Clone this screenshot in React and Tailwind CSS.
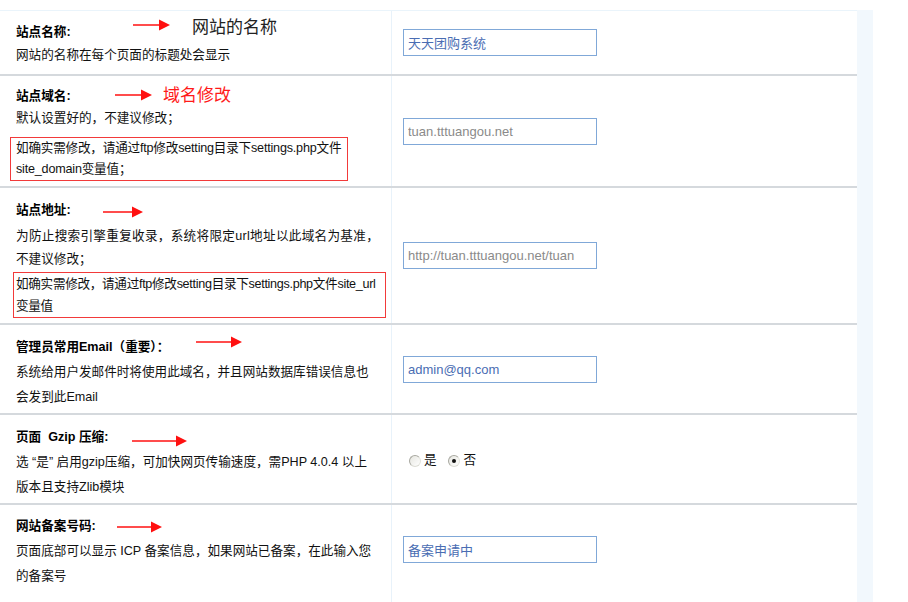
import React from "react";

// Red pointer used next to section titles
function Arrow({ w, className }) {
  return (
    <svg
      width={w}
      height="12"
      viewBox={`0 0 ${w} 12`}
      className={"pointer-events-none absolute " + className}
    >
      <line x1="0" y1="6" x2={w - 9} y2="6" stroke="#ff1010" strokeWidth="1.5" />
      <polygon points={`${w - 11},0.5 ${w},6 ${w - 11},11.5`} fill="#ff1010" />
    </svg>
  );
}

function Field({ value, muted }) {
  return (
    <input
      readOnly
      defaultValue={value}
      className={
        "h-[27px] w-[194px] border border-[#80a8d8] bg-white px-[4px] text-[13px] outline-none font-['Liberation_Sans','Noto_Sans_CJK_SC',sans-serif] " +
        (muted ? "text-[#8a8a8a]" : "text-[#4a6db3]")
      }
    />
  );
}

function Radio({ checked }) {
  return (
    <span className="relative inline-flex h-[12px] w-[12px] items-center justify-center rounded-full border border-[#a8a8a0] border-r-[#e4e4dc] border-b-[#dcdcd4] bg-linear-to-br from-[#e6e6e0] to-white">
      {checked && <span className="h-[4px] w-[4px] rounded-full bg-[#111]" />}
    </span>
  );
}

function Left({ children, className }) {
  return (
    <div
      className={
        "w-[392px] shrink-0 border-r border-[#e8f2fa] pl-4 text-[12.6px] text-[#111] " +
        (className || "")
      }
    >
      {children}
    </div>
  );
}

export default function App() {
  return (
    <div className="h-[602px] w-[908px] overflow-hidden bg-white font-['Liberation_Sans','Noto_Sans_CJK_SC',sans-serif]">
      <div className="mt-[10px] flex">
        <div className="w-[857px] shrink-0 border-t border-[#eaf4fb]">
          {/* 站点名称 */}
          <div className="relative flex h-[65px] border-b-2 border-[#d5d9dd]">
            <Left className="pt-[10px] leading-[23px]">
              <div className="font-bold text-black">站点名称:</div>
              <div className="whitespace-nowrap">网站的名称在每个页面的标题处会显示</div>
            </Left>
            <div className="flex flex-1 items-center pl-[11px]">
              <Field value="天天团购系统" />
            </div>
            <Arrow w={37} className="left-[133px] top-[8px]" />
            <span className="absolute left-[192px] top-[5px] text-[17px] leading-[24px] text-[#222]">
              网站的名称
            </span>
          </div>

          {/* 站点域名 */}
          <div className="relative flex h-[112px] border-b-2 border-[#d5d9dd]">
            <Left className="pt-[10px] leading-[21px]">
              <div className="font-bold text-black">站点域名:</div>
              <div className="mt-[1px] whitespace-nowrap">默认设置好的，不建议修改；</div>
              <div className="ml-[-6px] mt-[8px] w-[338px] whitespace-nowrap border border-[#f23a3a] pl-[5px] tracking-[-0.2px]">
                <div>如确实需修改，请通过ftp修改setting目录下settings.php文件</div>
                <div>site_domain变量值；</div>
              </div>
            </Left>
            <div className="flex flex-1 items-center pl-[11px]">
              <Field value="tuan.tttuangou.net" muted />
            </div>
            <Arrow w={37} className="left-[115px] top-[13px]" />
            <span className="absolute left-[163px] top-[8px] text-[17px] leading-[24px] text-[#ff1a1a]">
              域名修改
            </span>
          </div>

          {/* 站点地址 */}
          <div className="relative flex h-[137px] border-b-2 border-[#d5d9dd]">
            <Left className="pt-[11px]">
              <div className="font-bold leading-[22px] text-black">站点地址:</div>
              <div className="mt-[4px] whitespace-nowrap leading-[23px]">
                <div className="tracking-[0.3px]">为防止搜索引擎重复收录，系统将限定url地址以此域名为基准，</div>
                <div>不建议修改；</div>
              </div>
              <div className="ml-[-3px] mt-[1px] w-[373px] whitespace-nowrap border border-[#f23a3a] pl-[2px] leading-[22px] tracking-[-0.3px]">
                <div>如确实需修改，请通过ftp修改setting目录下settings.php文件site_url</div>
                <div>变量值</div>
              </div>
            </Left>
            <div className="flex flex-1 items-center pl-[11px]">
              <Field value="http://tuan.tttuangou.net/tuan" muted />
            </div>
            <Arrow w={40} className="left-[103px] top-[18px]" />
          </div>

          {/* 管理员常用Email */}
          <div className="relative flex h-[90px] border-b-2 border-[#d5d9dd]">
            <Left className="pt-[10px] leading-[25px]">
              <div className="font-bold text-black">管理员常用Email（重要）：</div>
              <div className="whitespace-nowrap">系统给用户发邮件时将使用此域名，并且网站数据库错误信息也</div>
              <div className="whitespace-nowrap">会发到此Email</div>
            </Left>
            <div className="flex flex-1 items-center pl-[11px]">
              <Field value="admin@qq.com" />
            </div>
            <Arrow w={46} className="left-[196px] top-[11px]" />
          </div>

          {/* Gzip 压缩 */}
          <div className="relative flex h-[90px] border-b-2 border-[#d5d9dd]">
            <Left className="pt-[10px] leading-[25px]">
              <div className="whitespace-pre font-bold text-black">页面  Gzip 压缩:</div>
              <div className="whitespace-nowrap">选 “是” 启用gzip压缩，可加快网页传输速度，需PHP 4.0.4 以上</div>
              <div className="whitespace-nowrap">版本且支持Zlib模块</div>
            </Left>
            <div className="flex flex-1 items-center pl-[17px] pt-[3px] text-[12.6px] text-[#111]">
              <Radio />
              <span className="ml-[3px]">是</span>
              <span className="ml-[11px] flex items-center">
                <Radio checked />
              </span>
              <span className="ml-[4px]">否</span>
            </div>
            <Arrow w={55} className="left-[132px] top-[20px]" />
          </div>

          {/* 网站备案号码 */}
          <div className="relative flex h-[100px]">
            <Left className="pt-[9px] leading-[25px]">
              <div className="font-bold text-black">网站备案号码:</div>
              <div className="whitespace-nowrap">页面底部可以显示 ICP 备案信息，如果网站已备案，在此输入您</div>
              <div className="whitespace-nowrap">的备案号</div>
            </Left>
            <div className="flex flex-1 items-start pl-[11px] pt-[31px]">
              <Field value="备案申请中" />
            </div>
            <Arrow w={45} className="left-[117px] top-[16px]" />
          </div>
        </div>
        <div className="w-[16px] shrink-0 self-stretch bg-[#f2f8fd]" />
      </div>
    </div>
  );
}
